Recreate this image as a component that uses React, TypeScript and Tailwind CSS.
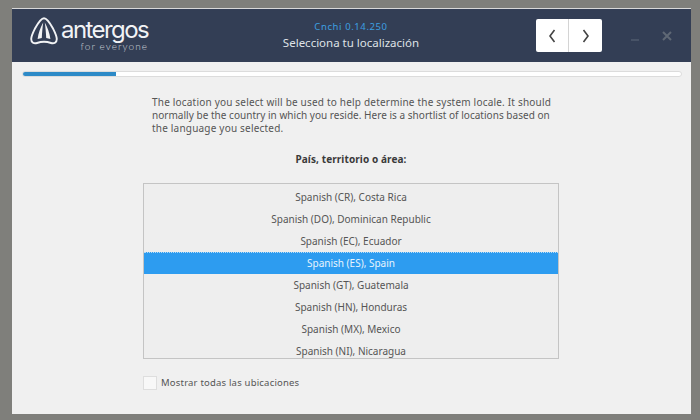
const locations = [
  { name: 'Spanish (CR), Costa Rica' },
  { name: 'Spanish (DO), Dominican Republic' },
  { name: 'Spanish (EC), Ecuador' },
  { name: 'Spanish (ES), Spain', selected: true },
  { name: 'Spanish (GT), Guatemala' },
  { name: 'Spanish (HN), Honduras' },
  { name: 'Spanish (MX), Mexico' },
  { name: 'Spanish (NI), Nicaragua' },
]

function Logo() {
  return (
    <div className="flex h-[38px] items-start">
      <svg className="h-[28px] w-[28px]" viewBox="0 0 28 28" fill="none">
        <path d="M14 1.2 C11 1.2 8 6 5 11.5 C3 15.5 1.2 19 1.2 22 C1.2 25.5 4 27 7 26 C11 24.6 17 24.6 21 26 C24 27 26.8 25.5 26.8 22 C26.8 19 25 15.5 23 11.5 C20 6 17 1.2 14 1.2 Z" stroke="#f2f3f5" strokeWidth="1.9" />
        <path d="M13.2 5.5 C10.5 10 8.4 16 7.6 22 L11.8 21 C12 16 12.6 10 13.2 5.5 Z" fill="#f2f3f5" />
        <path d="M14.8 5.5 C17.5 10 19.6 16 20.4 22 L16.2 21 C16 16 15.4 10 14.8 5.5 Z" fill="#f2f3f5" />
      </svg>
      <div className="ml-[1px] flex w-[89px] flex-col items-end">
        <span className="whitespace-nowrap font-['Inter',sans-serif] text-[24px] font-normal leading-[26px] tracking-[-1.6px] text-[#f2f3f5]">antergos</span>
        <span className="mt-[-3px] whitespace-nowrap font-['Lato',sans-serif] text-[10px] font-light leading-[13px] tracking-[1.05px] text-[#c9ced6]">for everyone</span>
      </div>
    </div>
  )
}

function Header() {
  return (
    <header className="flex h-[53px] items-center bg-[#333e55] pl-[18px]">
      <div className="w-[200px]">
        <Logo />
      </div>
      <div className="ml-[16px] flex w-[210px] flex-col items-center">
        <span className="text-[9.5px] leading-[13px] tracking-[0.6px] text-[#3d9fe0]">Cnchi  0.14.250</span>
        <span className="mt-[2px] text-[11.5px] leading-[16px] text-[#dfe2e7]">Selecciona tu localización</span>
      </div>
      <div className="ml-[80px] flex h-[33px] w-[66px] overflow-hidden rounded-[2px] bg-white">
        <button className="flex w-[33px] items-center justify-center border-r border-[#d4d4d4] text-[#444]">
          <svg className="h-[14px] w-[10px]" viewBox="0 0 10 14" fill="none" stroke="currentColor" strokeWidth="1.6">
            <path d="M7.5 1 3 7l4.5 6" />
          </svg>
        </button>
        <button className="flex flex-1 items-center justify-center text-[#444]">
          <svg className="h-[14px] w-[10px]" viewBox="0 0 10 14" fill="none" stroke="currentColor" strokeWidth="1.6">
            <path d="M2.5 1 7 7l-4.5 6" />
          </svg>
        </button>
      </div>
      <svg className="ml-[28px] mt-[2px] h-[10px] w-[10px]" viewBox="0 0 10 10" stroke="#4f5a6c" strokeWidth="1.6">
        <path d="M1 8h8" />
      </svg>
      <svg className="ml-[22px] h-[10px] w-[10px]" viewBox="0 0 10 10" stroke="#5f6875" strokeWidth="2">
        <path d="M1 1l8 8M9 1 1 9" />
      </svg>
    </header>
  )
}

export default function App() {
  return (
    <div className="h-[420px] w-[700px] overflow-hidden bg-[#7f7f7b] pl-[12px] pt-[8px] font-['Noto_Sans',sans-serif]">
      <div className="h-[406px] w-[679px] border-t border-[#d8d8d8] bg-[#f0f0f0]">
        <Header />

        {/* Progress */}
        <div className="mx-[10px] mt-[9px] h-[6px] w-[660px] overflow-hidden rounded-[3px] border border-[#dcdcdc] bg-white">
          <div className="-m-[1px] h-[6px] w-[94px] bg-[#2d8ac7]" />
        </div>

        {/* Content */}
        <div className="ml-[131px] w-[416px]">
          <div className="ml-[9px] mt-[19px] whitespace-nowrap text-[10px] leading-[13px] text-[#555]">
            <p className="tracking-[0.2px]">The location you select will be used to help determine the system locale. It should</p>
            <p className="tracking-[0.03px]">normally be the country in which you reside. Here is a shortlist of locations based on</p>
            <p className="tracking-[0.2px]">the language you selected.</p>
          </div>
          <h2 className="mt-[18px] text-center text-[10px] font-bold leading-[13px] tracking-[0.1px] text-[#3a3a3a]">
            País, territorio o área:
          </h2>

          <div className="mt-[17px] h-[176px] overflow-hidden border border-[#c4c4c4] bg-[#eeeeee]">
            <div className="pt-[2px]">
              {locations.map((loc) => (
                <div
                  key={loc.name}
                  className={
                    loc.selected
                      ? 'flex h-[22px] items-center justify-center border-t border-dotted border-[#b8dcf5] bg-[#2d9cf0] text-[10px] text-[#e8f4fd]'
                      : 'flex h-[22px] items-center justify-center pt-[1px] text-[10px] text-[#555]'
                  }
                >
                  {loc.name}
                </div>
              ))}
            </div>
          </div>

          <label className="mt-[17px] flex items-center">
            <span className="h-[14px] w-[14px] border border-[#dedede] bg-[#f8f8f8]" />
            <span className="ml-[4px] text-[9.5px] leading-[14px] tracking-[0.2px] text-[#555]">Mostrar todas las ubicaciones</span>
          </label>
        </div>
      </div>
    </div>
  )
}
